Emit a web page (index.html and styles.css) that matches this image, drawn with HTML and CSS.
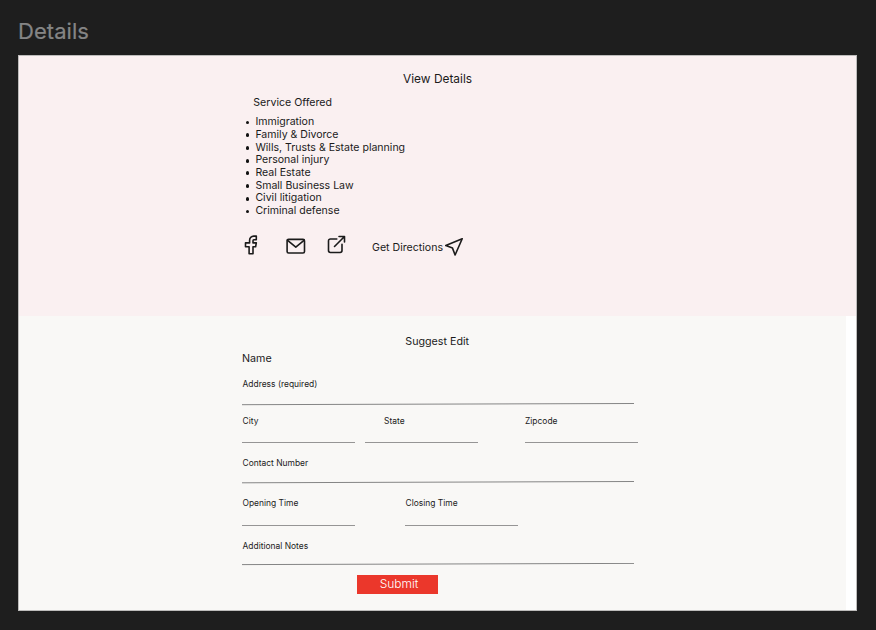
FILE: index.html
```html
<!DOCTYPE html>
<html lang="en">
<head>
<meta charset="utf-8">
<title>Details</title>
<link rel="stylesheet" href="styles.css">
</head>
<body>
<h1 class="board-title">Details</h1>
<main class="frame">
  <section class="details">
    <h2 class="details-title">View Details</h2>
    <h3 class="services-title">Service Offered</h3>
    <ul class="services">
      <li>Immigration</li>
      <li>Family &amp; Divorce</li>
      <li>Wills, Trusts &amp; Estate planning</li>
      <li>Personal injury</li>
      <li>Real Estate</li>
      <li>Small Business Law</li>
      <li>Civil litigation</li>
      <li>Criminal defense</li>
    </ul>
    <div class="links">
      <svg class="icon facebook" viewBox="0 0 14 20"><path d="M12.3 1.1H9.7A4.2 4.2 0 0 0 5.6 5.3V7.9H1.5V11.8H5.1V18.8H9V11.8H11.6L12.3 7.9H9V5.7Q9 4.8 9.9 4.8H12.3Z"/></svg>
      <svg class="icon mail" viewBox="0 0 20 17"><rect x="1.1" y="1.4" width="17.4" height="13.6" rx="1.5"/><path d="M1.3 2.2 9.8 9.2 18.3 2.2"/></svg>
      <svg class="icon external" viewBox="0 0 20 19"><path d="M9.8 4H3.4A1.9 1.9 0 0 0 1.5 5.9V15.6A1.9 1.9 0 0 0 3.4 17.5H13.1A1.9 1.9 0 0 0 15 15.6V9.2M12 1.5H17.5V7M17.5 1.5 7.5 11.5"/></svg>
      <span class="directions">Get Directions</span>
      <svg class="icon send" viewBox="0 0 20 20"><path d="M18.2 1.8 1.8 8.6 8.5 11.1 11.1 18Z"/></svg>
    </div>
  </section>
  <section class="edit">
    <h2 class="edit-title">Suggest Edit</h2>
    <p class="name">Name</p>
    <div class="field address">
      <span>Address (required)</span>
      <svg class="rule" viewBox="0 0 392 3"><path d="M0 1.7 392 .5"/></svg>
    </div>
    <div class="row place">
      <div class="short"><span>City</span></div>
      <div class="short state"><span>State</span></div>
      <div class="short zip"><span>Zipcode</span></div>
    </div>
    <div class="field contact">
      <span>Contact Number</span>
      <svg class="rule" viewBox="0 0 392 3"><path d="M0 1.8 392 .5"/></svg>
    </div>
    <div class="row hours">
      <div class="short"><span>Opening Time</span></div>
      <div class="short closing"><span>Closing Time</span></div>
    </div>
    <div class="field notes">
      <span>Additional Notes</span>
      <svg class="rule" viewBox="0 0 392 3"><path d="M0 1.6 392 .4"/></svg>
    </div>
    <button class="submit" type="button">Submit</button>
  </section>
</main>
</body>
</html>
```
FILE: styles.css
```css
* { box-sizing: border-box; margin: 0; padding: 0; }
body {
  width: 876px;
  height: 630px;
  overflow: hidden;
  padding: 17px 0 0 18px;
  background: #1e1e1e;
  color: #1b1b1b;
  font-family: Inter, "Liberation Sans", sans-serif;
}
h1, h2, h3 { font-weight: 400; }
.board-title { height: 38px; color: #858585; font-size: 22px; line-height: 28px; letter-spacing: .05px; -webkit-text-stroke: .2px #858585; }
.frame {
  width: 839px;
  height: 556px;
  border: 1px solid #bdbcbb;
  background: #fff;
}
.details { height: 260px; padding: 15px 0 0 223px; background: #faf0f1; }
.details-title { padding-left: 161px; font-size: 11.9px; line-height: 16px; }
.services-title { margin-top: 9px; padding-left: 11.3px; font-size: 10.6px; line-height: 14px; }
.services { margin-top: 6.2px; list-style: none; font-size: 10.55px; line-height: 12.7px; }
.services li { display: flex; align-items: center; gap: 6px; padding-left: 3.6px; }
.services li::before { content: ""; width: 3.8px; height: 3.8px; border-radius: 50%; background: #111; }
.links { display: flex; align-items: flex-start; height: 24px; margin-top: 17.2px; }
.icon { flex: none; fill: none; stroke: #1b1b1b; stroke-width: 1.6; stroke-linejoin: round; stroke-linecap: round; }
.facebook { width: 14px; height: 20px; margin-left: 2px; }
.mail { width: 20px; height: 17px; margin: 3px 0 0 28px; }
.external { width: 20px; height: 19px; margin-left: 21px; }
.directions { width: 72px; margin: 6px 0 0 25px; font-size: 10.6px; line-height: 14px; white-space: nowrap; }
.send { width: 20px; height: 20px; margin-top: 2px; }
.edit { width: 827px; height: 294px; padding: 18px 0 0 223px; background: #f9f8f6; }
.edit-title { padding-left: 163.3px; font-size: 10.7px; line-height: 16px; }
.name { margin-top: 1px; font-size: 10.7px; line-height: 16px; }
.field, .short { font-size: 8.45px; line-height: 12px; }
.field span, .short span { display: block; padding-left: .5px; }
.rule { display: block; width: 392px; height: 3px; fill: none; stroke: #858585; stroke-width: 1; }
.address { margin-top: 11px; }
.address .rule { margin-top: 13px; }
.contact .rule { margin-top: 12px; }
.row { display: flex; }
.place { margin-top: 9px; }
.short { width: 113px; height: 28px; border-bottom: 1px solid #969595; }
.short.state { margin-left: 10px; }
.short.state span { padding-left: 19px; }
.short.zip span { padding-left: 0; }
.zip { margin-left: 47px; }
.contact { margin-top: 14px; }
.hours { margin-top: 13px; }
.hours .short { height: 29px; }
.closing { margin-left: 50px; }
.notes { margin-top: 14px; }
.notes .rule { margin-top: 11px; }
.submit {
  display: block;
  width: 81px;
  height: 19px;
  margin: 9px 0 0 115px;
  padding: 0 0 2px 3px;
  border: 0;
  background: #eb372b;
  color: #fff;
  font: 300 12px/17px Inter, "Liberation Sans", sans-serif;
}
```
